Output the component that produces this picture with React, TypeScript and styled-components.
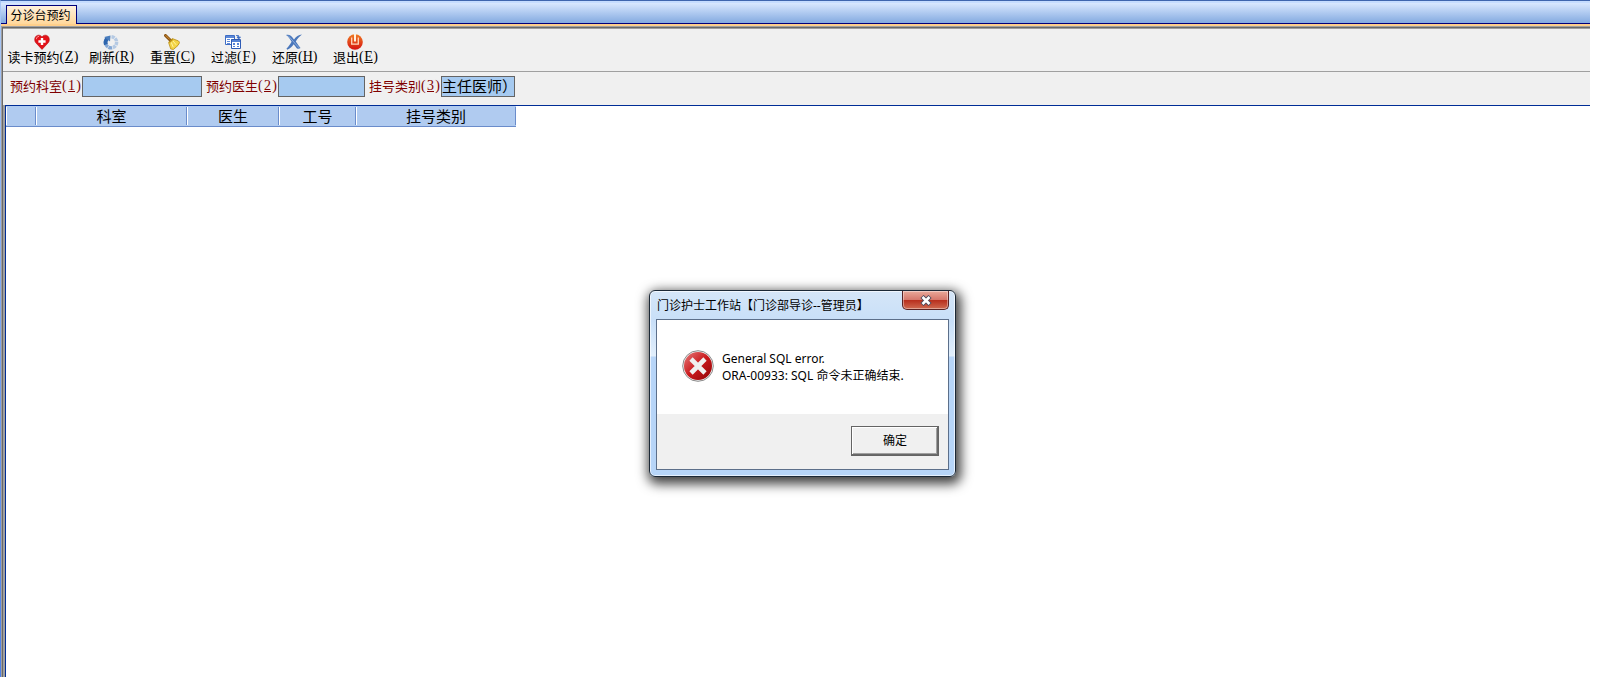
import React from 'react';
import styled, { createGlobalStyle } from 'styled-components';

const GlobalStyle = createGlobalStyle`
  *, *::before, *::after { box-sizing: border-box; }
  html, body, #root { height: 100%; }
  body {
    margin: 0;
    background: #fff;
    color: #000;
    font-family: "Noto Sans CJK SC", "Liberation Sans", sans-serif;
    font-size: 13px;
    overflow: hidden;
  }
  button, input { font: inherit; color: inherit; margin: 0; }
`;

const Screen = styled.div`
  min-height: 100vh;
  padding-right: 10px;
  display: flex;
  flex-direction: column;
`;

const TabStrip = styled.nav`
  height: 24px;
  padding: 4px 0 0 5px;
  border-top: 1px solid #3f66ae;
  border-left: 1px solid #a9c7f5;
  background: linear-gradient(#c6ddff 0 2px, #d9e8ff 2px, #84aae0 22px, #00007b 22px);
`;

const Tab = styled.button`
  display: block;
  height: 19px;
  width: 71px;
  padding: 0 2px 0 0;
  border: 1px solid #00007b;
  border-bottom: 0;
  background: linear-gradient(#fff1dc, #ffd79b);
  font-size: 12px;
  line-height: 18px;
  text-align: center;
`;

const TabBase = styled.div`
  height: 2px;
  border-left: 1px solid #a9c7f5;
  background: #ffcf8b;
`;

const Workspace = styled.main`
  flex: 1;
  display: flex;
  padding-left: 1px;
  background: linear-gradient(#a9c7f5, #4d7fe6);
`;

const Frame = styled.div`
  flex: 1;
  min-width: 0;
  display: flex;
  flex-direction: column;
  border-top: 1px solid #a0a0a0;
  border-left: 1px solid #a0a0a0;
`;

const FrameInner = styled.div`
  flex: 1;
  display: flex;
  flex-direction: column;
  border-top: 1px solid #696969;
  border-left: 1px solid #696969;
  background: #f0f0f0;
`;

const Toolbar = styled.div`
  display: flex;
  height: 44px;
  padding-left: 1px;
  border-top: 1px solid #a0a0a0;
  border-bottom: 1px solid #a0a0a0;
`;

const ToolButton = styled.button<{ $wide?: boolean }>`
  display: flex;
  flex-direction: column;
  align-items: center;
  width: ${(p) => (p.$wide ? 76 : 61)}px;
  padding: 5px 0 0;
  border: 0;
  background: none;
  line-height: 14px;
  white-space: nowrap;

  svg { display: block; width: 16px; height: 16px; flex: none; }
`;

const ToolText = styled.span`
  display: flex;
  padding-left: 2px;
`;

const Key = styled.span`
  display: inline-flex;
  justify-content: space-between;
  width: 19px;
  font-family: "Liberation Serif", serif;
  font-size: 14px;
`;

const FilterBar = styled.form`
  display: flex;
  height: 33px;
  padding: 4px 0 0 7px;
`;

const FilterLabel = styled.label`
  display: flex;
  width: 72px;
  color: #800000;
  line-height: 20px;
  white-space: nowrap;
`;

const FilterInput = styled.input<{ $width: number }>`
  width: ${(p) => p.$width}px;
  height: 21px;
  margin-right: 4px;
  padding: 0 0 2px;
  border: 1px solid #646464;
  border-radius: 0;
  outline: 0;
  background: #a6caf0;
  font-size: 15px;
`;

const GridPane = styled.section`
  flex: 1;
  border-left: 2px solid #a0a0a0;
  background: #fff;
`;

const GridBorder = styled.div`
  height: 100%;
  border-top: 1px solid #002d96;
  border-left: 1px solid #002d96;
`;

const Grid = styled.table`
  width: 510px;
  border-collapse: separate;
  border-spacing: 0;
  table-layout: fixed;
`;

const HeadCell = styled.th<{ $width: number }>`
  width: ${(p) => p.$width}px;
  height: 21px;
  padding: 0;
  border-bottom: 1px solid #6a8ccb;
  background:
    linear-gradient(#fff, #fff) left center / 1px 18px no-repeat,
    linear-gradient(#6a8ccb, #6a8ccb) right center / 1px 18px no-repeat,
    #b0cbf0;
  font-size: 15px;
  font-weight: 400;
  line-height: 20px;
`;

const Dialog = styled.div`
  position: absolute;
  top: 290px;
  left: calc(50% - 151px);
  width: 307px;
  padding: 0 6px 6px;
  border: 1px solid #1b2836;
  border-radius: 6px;
  background: linear-gradient(#d5e6f8, #c8dff8 30px, #e2effc 65px, #b7d5f8 66px, #b7d5f8);
  box-shadow: inset 0 0 0 1px rgba(255, 255, 255, 0.65), 2px 4px 12px 3px rgba(0, 0, 0, 0.75);
  font-family: "Noto Sans", "Noto Sans CJK SC", sans-serif;
  font-size: 12px;
`;

const DialogTitleBar = styled.header`
  display: flex;
  justify-content: space-between;
  align-items: flex-start;
  height: 28px;
`;

const DialogTitle = styled.h1`
  margin: 0;
  padding-left: 1px;
  font-size: 12px;
  font-weight: 400;
  line-height: 30px;
  white-space: nowrap;
`;

const CloseButton = styled.button`
  display: flex;
  align-items: center;
  justify-content: center;
  width: 47px;
  height: 19px;
  padding: 0;
  border: 1px solid #5a2324;
  border-top: 0;
  border-radius: 0 0 5px 5px;
  background: linear-gradient(#e9a99b, #d5766a 9px, #b72d1c 9px, #cf6a51);
  box-shadow: inset 0 0 0 1px rgba(255, 255, 255, 0.4);
`;

const DialogContent = styled.div`
  border: 1px solid #5c6f8a;
  background: #fff;
`;

const Message = styled.div`
  display: flex;
  height: 94px;
  padding: 30px 0 0 25px;
  gap: 8px;

  p { margin: 0; line-height: 17px; white-space: pre-line; }
`;

const DialogFooter = styled.footer`
  display: flex;
  justify-content: flex-end;
  height: 55px;
  padding: 12px 9px 0 0;
  background: #f0f0f0;
`;

const OkButton = styled.button`
  width: 88px;
  height: 30px;
  padding: 0;
  border: 1px solid #646464;
  background: #f0f0f0;
  box-shadow: inset -1px -1px #696969, inset 1px 1px #fff, inset -2px -2px #a0a0a0;
  line-height: 28px;
`;

const HeartIcon = () => (
  <svg viewBox="0 0 16 16" aria-hidden="true">
    <path d="M8 15.4 1.6 8.6C-.2 6 .8 1.4 4.4 1.2 6.2 1.1 7.4 2 8 3c.6-1 1.8-1.9 3.6-1.8 3.6.2 4.6 4.8 2.8 7.4z" fill="#e31219" stroke="#b5080d" strokeWidth=".6" />
    <path d="M2.3 5.2C2.5 3.5 3.4 2.5 5 2.4" stroke="#ff8f8f" fill="none" />
    <path d="M6.8 4h2.4v2.3h2.4v2.4H9.2V11H6.8V8.7H4.4V6.3h2.4z" fill="#fff" />
  </svg>
);

const RefreshIcon = () => (
  <svg viewBox="0 0 16 16" aria-hidden="true" fill="none" strokeWidth="3.4">
    <path d="M8.500 2.700A5.600 5.600 0 0 1 9 13.800" stroke="#b4c9e3" strokeDasharray="3.200 .7" />
    <path d="M9 13.800A5.600 5.600 0 0 1 2.800 10" stroke="#83a7d5" strokeDasharray="3.600 .5" />
    <path d="M3 10.500A5.600 5.600 0 0 1 4.500 4.200" stroke="#2f66ae" strokeWidth="4" />
    <path d="M1.200 3 7.500 1.600 7 7.400z" fill="#4a7dbd" />
  </svg>
);

const BroomIcon = () => (
  <svg viewBox="0 0 16 16" aria-hidden="true">
    <path d="m1.5 1.5 4.8 4.8" stroke="#8a5312" strokeWidth="3" strokeLinecap="round" />
    <path d="m1.6 1.3 4.2 4.2" stroke="#d89639" strokeWidth="1" />
    <path d="M4.600 8.500 8.400 4.600l6 2.300 1.300 1.500-1.700 3-4.600 4.100-2.700-.6z" fill="#f3d445" stroke="#b98d16" strokeWidth=".8" />
    <path d="m7.2 8.3 2 4.8M9 7l3.2 3.8" stroke="#fff3a1" />
    <path d="m5.2 8.3 3.4-3.2" stroke="#b98d16" strokeWidth="1.6" />
  </svg>
);

const FilterIcon = () => (
  <svg viewBox="0 0 16 16" aria-hidden="true">
    <path d="M.5 1.5h9v9h-9z" fill="#fff" stroke="#3e6dc4" />
    <path d="M1 2h8v2H1zM2 5h3v1H2zM6 5h3v1H6zM2 7h3v1H2zM2 9h3v1H2z" fill="#5c88d8" />
    <path d="M6.5 5.5h9v9h-9z" fill="#fff" stroke="#2e5bb5" />
    <path d="M7 6h8v2H7zM8 9h2v2H8zM12 9h2v2h-2zM8 12h2v1H8zM12 12h2v1h-2z" fill="#5683d5" />
    <path d="M11 1.500h2.500V3M12 3h3.500L13.700 5z" stroke="#3e6dc4" fill="#3e6dc4" strokeWidth=".8" />
  </svg>
);

const RestoreIcon = () => (
  <svg viewBox="0 0 16 16" aria-hidden="true">
    <path d="M0 1c3-.7 5 0 8 4.600C10 2.500 12.500.6 16 .4c-3 2.300-5 4.500-6.200 7.100 1.700 2.500 3.200 4.500 4.700 6.500-1.800 1.300-3.500.8-4.500-.8L7.700 10.300C6 12.800 4 14.800 1.200 15.800L.5 14.500C2.300 12.800 4 10.500 5.600 7.700 4 5 2.500 2.500 0 1z" fill="#4a77bb" />
    <path d="m2 1.500 11 12.300" stroke="#89aadc" />
  </svg>
);

const ExitIcon = () => (
  <svg viewBox="0 0 16 16" aria-hidden="true">
    <defs>
      <linearGradient id="exit" x2="0" y2="1">
        <stop stopColor="#f07b22" />
        <stop offset="1" stopColor="#d51212" />
      </linearGradient>
    </defs>
    <circle cx="8" cy="8" r="7.800" fill="url(#exit)" />
    <path d="M4.700 3.500v6.700h6.600V3.500" fill="none" stroke="#ffd8bd" strokeWidth="1.300" />
    <path d="M8 0v7.500" stroke="#fff0df" strokeWidth="2" />
  </svg>
);

const ErrorIcon = () => (
  <svg width="32" height="32" viewBox="0 0 32 32" aria-hidden="true">
    <defs>
      <linearGradient id="err" x2="1" y2="1">
        <stop stopColor="#e77c7c" />
        <stop offset=".5" stopColor="#c9191c" />
        <stop offset="1" stopColor="#8f0406" />
      </linearGradient>
    </defs>
    <circle cx="16" cy="16" r="15.300" fill="#f2f2f2" stroke="#8b8b8b" />
    <circle cx="16" cy="16" r="14" fill="url(#err)" />
    <path d="m9 9 14 14M23 9 9 23" stroke="#f0f0f0" strokeWidth="4.600" />
  </svg>
);

const tools = [
  { text: '读卡预约', key: 'Z', icon: <HeartIcon />, wide: true },
  { text: '刷新', key: 'R', icon: <RefreshIcon /> },
  { text: '重置', key: 'C', icon: <BroomIcon /> },
  { text: '过滤', key: 'F', icon: <FilterIcon /> },
  { text: '还原', key: 'H', icon: <RestoreIcon /> },
  { text: '退出', key: 'E', icon: <ExitIcon /> },
];

const filters = [
  { id: 'dept', text: '预约科室', key: '1', width: 120, value: '' },
  { id: 'doctor', text: '预约医生', key: '2', width: 87, value: '' },
  { id: 'kind', text: '挂号类别', key: '3', width: 74, value: '主任医师）' },
];

const columns = [
  { title: '', width: 30 },
  { title: '科室', width: 151 },
  { title: '医生', width: 92 },
  { title: '工号', width: 77 },
  { title: '挂号类别', width: 160 },
];

const Shortcut = ({ children }: { children: string }) => (
  <Key>(<u>{children}</u>)</Key>
);

export default function App() {
  return (
    <Screen>
      <GlobalStyle />
      <TabStrip>
        <Tab type="button">分诊台预约</Tab>
      </TabStrip>
      <TabBase />
      <Workspace>
        <Frame>
          <FrameInner>
            <Toolbar>
              {tools.map((t) => (
                <ToolButton key={t.key} type="button" $wide={t.wide}>
                  {t.icon}
                  <ToolText>{t.text}<Shortcut>{t.key}</Shortcut></ToolText>
                </ToolButton>
              ))}
            </Toolbar>
            <FilterBar>
              {filters.map((f) => (
                <React.Fragment key={f.id}>
                  <FilterLabel htmlFor={f.id}>{f.text}<Shortcut>{f.key}</Shortcut></FilterLabel>
                  <FilterInput id={f.id} $width={f.width} defaultValue={f.value} />
                </React.Fragment>
              ))}
            </FilterBar>
            <GridPane>
              <GridBorder>
                <Grid>
                  <thead>
                    <tr>
                      {columns.map((c) => (
                        <HeadCell key={c.title} $width={c.width}>{c.title}</HeadCell>
                      ))}
                    </tr>
                  </thead>
                </Grid>
              </GridBorder>
            </GridPane>
          </FrameInner>
        </Frame>
      </Workspace>
      <Dialog role="alertdialog" aria-labelledby="dialog-title">
        <DialogTitleBar>
          <DialogTitle id="dialog-title">门诊护士工作站【门诊部导诊--管理员】</DialogTitle>
          <CloseButton type="button" aria-label="关闭">
            <svg width="12" height="11" viewBox="0 0 12 11" aria-hidden="true">
              <path d="m2 1.500 8 8m0-8-8 8" stroke="#4d4a5c" strokeWidth="4.500" />
              <path d="m2.500 2 7 7m0-7-7 7" stroke="#fff" strokeWidth="2.500" />
            </svg>
          </CloseButton>
        </DialogTitleBar>
        <DialogContent>
          <Message>
            <ErrorIcon />
            <p>{'General SQL error.\nORA-00933: SQL 命令未正确结束.'}</p>
          </Message>
          <DialogFooter>
            <OkButton type="button">确定</OkButton>
          </DialogFooter>
        </DialogContent>
      </Dialog>
    </Screen>
  );
}
